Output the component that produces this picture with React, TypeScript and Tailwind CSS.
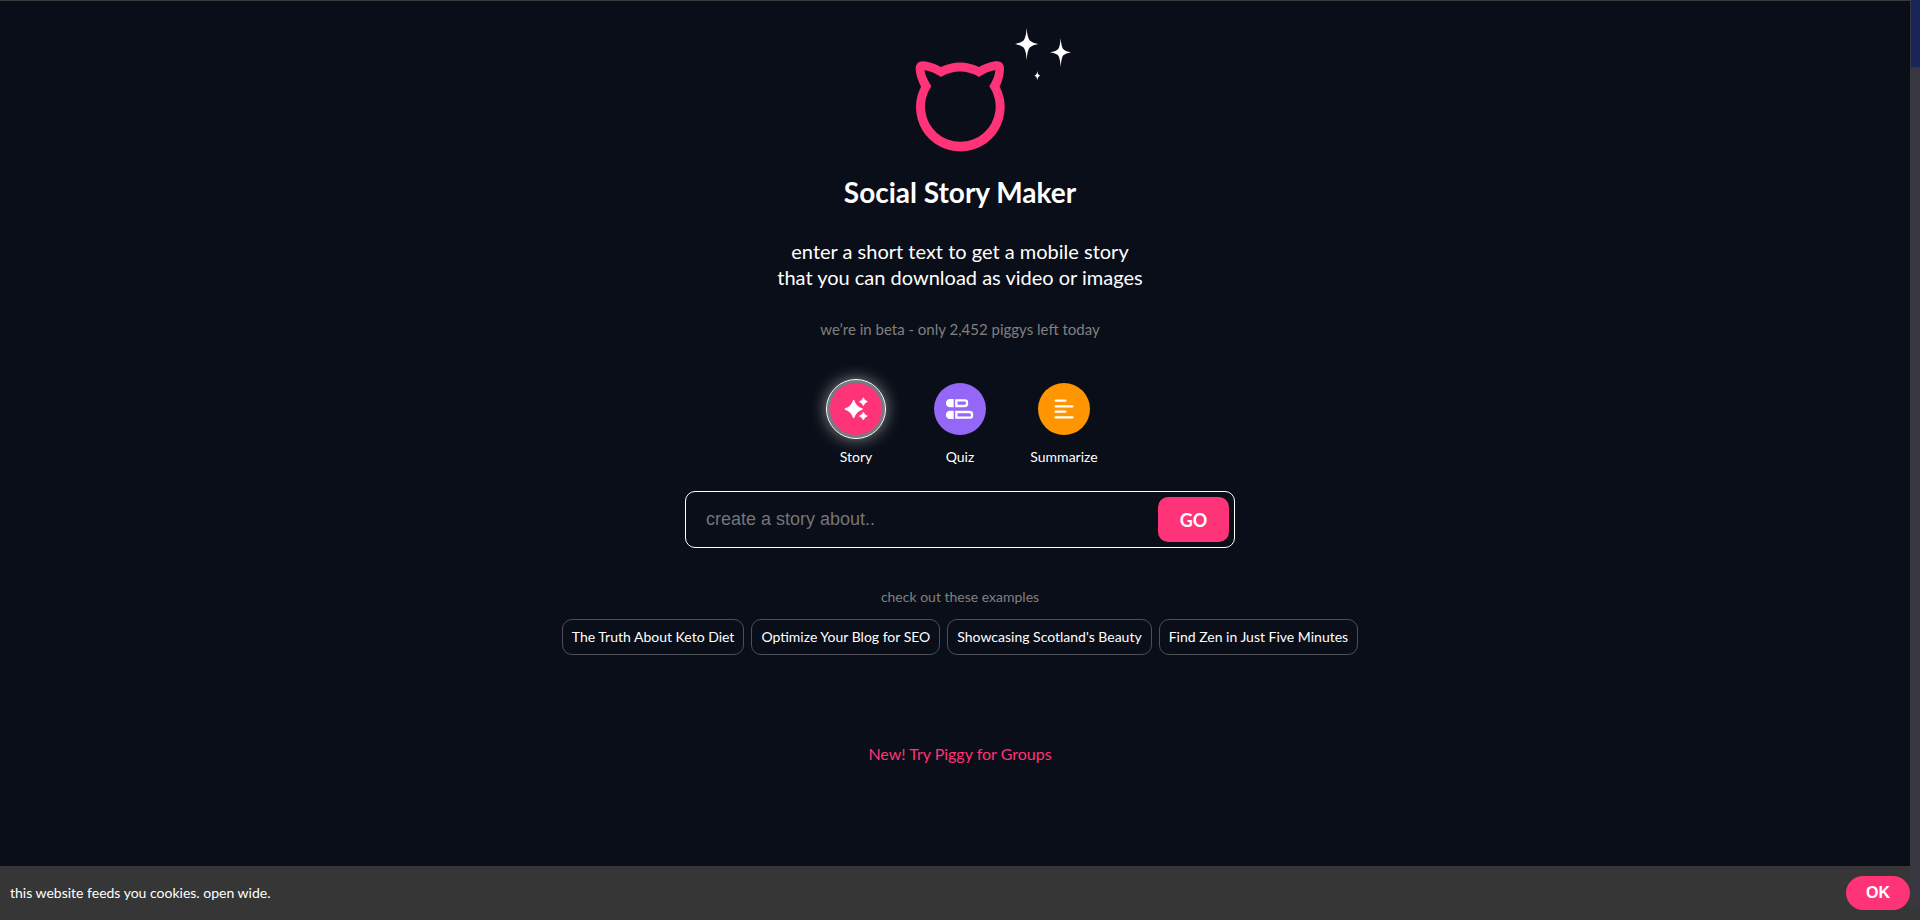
import { useState } from 'react';

const modes = [
  { id: 'story', label: 'Story', color: 'bg-[#ff3377]', placeholder: 'create a story about..' },
  { id: 'quiz', label: 'Quiz', color: 'bg-[#9467f6]', placeholder: 'create a quiz about..' },
  { id: 'summarize', label: 'Summarize', color: 'bg-[#ff9500]', placeholder: 'paste a text or a link..' },
];

const examples = [
  'The Truth About Keto Diet',
  'Optimize Your Blog for SEO',
  "Showcasing Scotland's Beauty",
  'Find Zen in Just Five Minutes',
];

function Logo() {
  return (
    <svg viewBox="75 54 270 372" className="w-[90px] h-[124px] overflow-visible" aria-hidden="true">
      <path
        fill="#ff3377"
        fillRule="evenodd"
        d="M153 171C135 162 115 154 98 154Q76 154 77 180C78 196 85 214 93 230A133 133 0 1 0 329 230C337 214 341 196 342 180Q343 154 321 154C305 154 285 162 267 171A133 133 0 0 0 153 171ZM153 201C138 192 120 182 103 181C106 198 115 214 124 229A106 106 0 1 0 298 229C307 214 315 198 316 181C300 182 282 192 267 201A106 106 0 0 0 153 201Z"
      />
      {/* Sparkles */}
      <g fill="#fff">
        <path d="M410 54Q412 84 420 92Q428 99 445 102Q428 105 420 112Q412 120 410 150Q408 120 400 112Q392 105 375 102Q392 99 400 92Q408 84 410 54Z" />
        <path d="M512 85Q514 111 520 118Q527 125 543 127Q527 130 520 136Q514 143 512 170Q510 143 504 136Q497 130 480 127Q497 125 504 118Q510 111 512 85Z" />
        <path d="M442 183Q443 195 451 197Q443 199 442 211Q441 199 433 197Q441 195 442 183Z" />
      </g>
    </svg>
  );
}

function ModeIcon({ id }: { id: string }) {
  if (id === 'story') {
    return (
      <svg viewBox="0 0 78 78" className="w-[26px] h-[26px]" fill="#fff" aria-hidden="true">
        <path d="M32 13Q38 33 57 39Q38 45 32 65Q26 45 7 39Q26 33 32 13Z" stroke="#fff" strokeWidth="4" strokeLinejoin="round" />
        <path d="M61 5Q64 14 73 17Q64 20 61 29Q58 20 49 17Q58 14 61 5Z" stroke="#fff" strokeWidth="2" strokeLinejoin="round" />
        <path d="M61 48Q64 57 73 60Q64 63 61 72Q58 63 49 60Q58 57 61 48Z" stroke="#fff" strokeWidth="2" strokeLinejoin="round" />
      </svg>
    );
  }
  if (id === 'quiz') {
    return (
      <svg viewBox="0 0 84 60" className="w-7 h-5" aria-hidden="true">
        <path fill="#fff" d="M23 0V25H12A12 12 0 0 1 12 0ZM23 35V60H12A12 12 0 0 1 12 35Z" />
        <path
          fill="none"
          stroke="#fff"
          strokeWidth="7"
          d="M31 4H56Q63 4 63 10V15Q63 21 56 21H31ZM31 39H70Q78 39 78 45V50Q78 56 70 56H31Z"
        />
      </svg>
    );
  }
  return (
    <svg viewBox="0 0 60 60" className="w-5 h-5" stroke="#fff" strokeWidth="7" strokeLinecap="round" aria-hidden="true">
      <path d="M5 5H34M5 22H55M5 38H34M5 55H55" />
    </svg>
  );
}

export default function App() {
  const [mode, setMode] = useState('story');
  const [text, setText] = useState('');
  const [showCookies, setShowCookies] = useState(true);

  const current = modes.find(m => m.id === mode) || modes[0];

  return (
    <div className="relative min-h-screen flex flex-col bg-[#0a0e18] border-t border-[#3a3a3a] text-white font-[Lato,'Open_Sans',sans-serif]">
      <main className="flex-1 flex flex-col items-center px-4 pt-[27px] pb-8">
        <Logo />

        <h1 className="mt-[22px] text-[28px] leading-9 font-bold">Social Story Maker</h1>

        <p className="mt-7 text-xl leading-[26px] text-center">
          enter a short text to get a mobile story
          <br />
          that you can download as video or images
        </p>

        <p className="mt-[29px] text-[15px] leading-5 text-[#808080]">
          we’re in beta - only 2,452 piggys left today
        </p>

        {/* Modes */}
        <div className="mt-11 flex">
          {modes.map(m => (
            <button
              key={m.id}
              type="button"
              aria-pressed={m.id === mode}
              onClick={() => setMode(m.id)}
              className="w-[104px] flex flex-col items-center gap-3 text-sm leading-5 cursor-pointer"
            >
              <span
                className={`w-[52px] h-[52px] rounded-full flex items-center justify-center ${m.color} ${
                  m.id === mode
                    ? 'outline outline-white outline-offset-3 shadow-[0_0_0_3px_#777a80,0_0_16px_4px_rgba(255,255,255,0.5)]'
                    : ''
                }`}
              >
                <ModeIcon id={m.id} />
              </span>
              {m.label}
            </button>
          ))}
        </div>

        {/* Prompt */}
        <form
          onSubmit={e => e.preventDefault()}
          className="mt-6 w-full max-w-[550px] flex border border-white rounded-[10px] p-[5px]"
        >
          <input
            type="text"
            aria-label={current.placeholder}
            placeholder={current.placeholder}
            value={text}
            onChange={e => setText(e.target.value)}
            className="flex-1 min-w-0 pl-[15px] pb-[2px] bg-transparent outline-none text-lg leading-6 placeholder:text-[#757575] font-['Liberation_Sans',Arial,sans-serif]"
          />
          <button type="submit" className="w-[71px] h-[45px] rounded-[10px] bg-[#ff3377] text-lg font-bold cursor-pointer">
            GO
          </button>
        </form>

        {/* Examples */}
        <p className="mt-[39px] text-sm leading-5 text-[#808080]">check out these examples</p>
        <div className="mt-3 flex flex-wrap justify-center gap-[7px]">
          {examples.map(example => (
            <button
              key={example}
              type="button"
              onClick={() => setText(example)}
              className="h-9 px-[9px] border border-[#4d5059] rounded-[10px] text-sm cursor-pointer"
            >
              {example}
            </button>
          ))}
        </div>

        <a href="#groups" className="mt-[89px] text-base leading-5 text-[#ff3377]">
          New! Try Piggy for Groups
        </a>
      </main>

      {showCookies && (
        <footer className="flex items-center justify-between bg-[#363636] p-[10px]">
          <p className="text-sm">this website feeds you cookies. open wide.</p>
          <button
            type="button"
            onClick={() => setShowCookies(false)}
            className="w-16 h-[34px] rounded-full bg-[#ff3377] text-base font-bold cursor-pointer font-['Liberation_Sans',Arial,sans-serif]"
          >
            OK
          </button>
        </footer>
      )}

      {/* Scroll track */}
      <div className="absolute -top-px bottom-[10px] right-0 w-[10px] bg-[#373641] border-l border-[#3a3a3a]">
        <div className="h-[67px] bg-[#17255a]" />
      </div>
    </div>
  );
}
